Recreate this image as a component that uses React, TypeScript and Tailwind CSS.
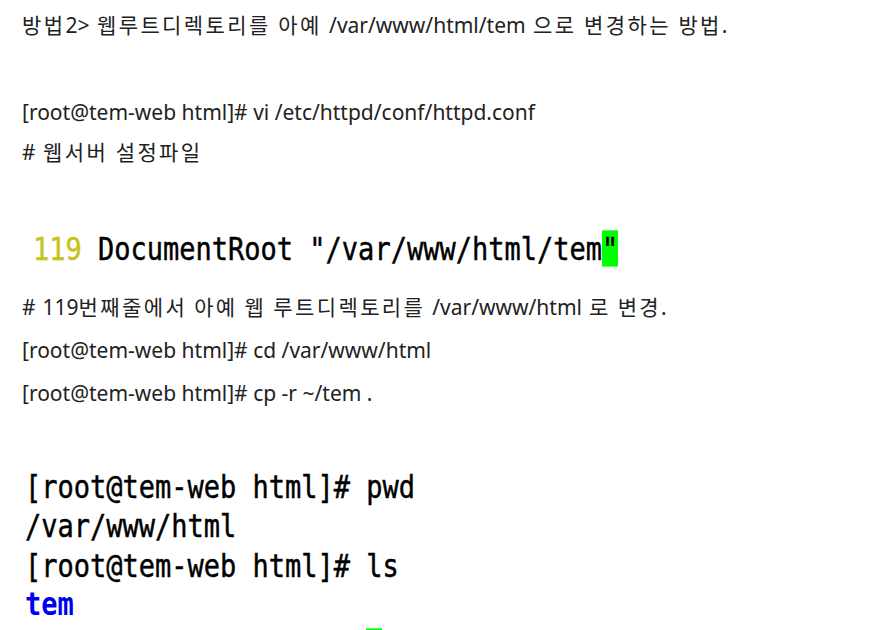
import React from "react";

const body = {
  fontFamily: '"Noto Sans", "Noto Sans CJK KR", sans-serif',
};
const mono = {
  fontFamily: '"DejaVu Sans Mono", monospace',
};

function K({ text }: { text: string }) {
  const parts = text.split(/([\uAC00-\uD7A3]+)/);
  return (
    <>
      {parts.map((p, i) =>
        /[\uAC00-\uD7A3]/.test(p) ? (
          <span key={i} className="tracking-[2.4px]">
            {p}
          </span>
        ) : (
          <span key={i}>{p}</span>
        )
      )}
    </>
  );
}

export default function App() {
  return (
    <div className="w-[873px] h-[630px] overflow-hidden bg-white text-[#222]">
      <div className="pl-[22px] pt-[4px] text-[21px]" style={body}>
        <p className="h-[43px] leading-[43px] [word-spacing:2px]">
          <K text="방법2> 웹루트디렉토리를 아예 /var/www/html/tem 으로 변경하는 방법." />
        </p>
        <p className="h-[43px]">&nbsp;</p>
        <p className="h-[42px] leading-[44px]">[root@tem-web html]# vi /etc/httpd/conf/httpd.conf</p>
        <p className="h-[42px] leading-[40px] [word-spacing:2px]">
          <K text="# 웹서버 설정파일" />
        </p>
      </div>
      <div className="mt-[54px] h-[42px] pl-[33px]">
        <div
          className="origin-top-left scale-y-[1.17] text-[27px] leading-[36px] text-black [-webkit-text-stroke:0.4px_black] whitespace-pre"
          style={mono}
        >
          <span className="text-[#c8c21c] [-webkit-text-stroke:0.4px_#c8c21c]">119</span> DocumentRoot "/var/www/html/tem<span className="bg-[#00ff00]">"</span>
        </div>
      </div>
      <div className="mt-[16px] pl-[22px] text-[21px]" style={body}>
        <p className="h-[43px] leading-[42px] [word-spacing:1.5px]">
          <K text="# 119번째줄에서 아예 웹 루트디렉토리를 /var/www/html 로 변경." />
        </p>
        <p className="h-[43px] leading-[43px]">[root@tem-web html]# cd /var/www/html</p>
        <p className="h-[43px] leading-[43px]">[root@tem-web html]# cp -r ~/tem .</p>
      </div>
      <div className="mt-[53px] pl-[25px]">
        <div
          className="origin-top-left scale-y-[1.17] text-[27px] leading-[33.4px] text-black [-webkit-text-stroke:0.4px_black] whitespace-pre"
          style={mono}
        >
          <div>[root@tem-web html]# pwd</div>
          <div>/var/www/html</div>
          <div>[root@tem-web html]# ls</div>
          <div className="text-[#0000f0] font-bold [-webkit-text-stroke:0px_#0000f0]">tem</div>
          <div className="h-[33.4px] pt-[3px]">
            <span className="inline-block ml-[341px] w-[16.3px] h-[30px] bg-[#00ff00] align-top"></span>
          </div>
        </div>
      </div>
    </div>
  );
}
